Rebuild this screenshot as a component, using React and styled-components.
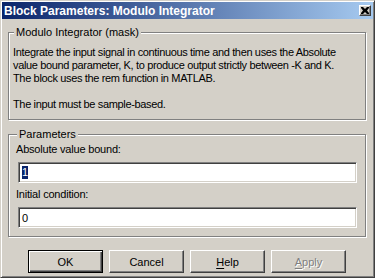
import React from 'react';
import styled, { createGlobalStyle } from 'styled-components';

const GlobalStyle = createGlobalStyle`
    html, body {
        margin: 0;
        padding: 0;
        background: #d4d0c8;
    }
    body {
        font-family: "Liberation Sans", Arial, sans-serif;
        font-size: 11px;
        color: #000;
    }
`;

const Window = styled.div`
    box-sizing: border-box;
    width: 375px;
    height: 278px;
    padding: 1px;
    display: flex;
    flex-direction: column;
    background: #d4d0c8;
    border: 1px solid;
    border-color: #d4d0c8 #404040 #404040 #d4d0c8;
    box-shadow: inset 1px 1px 0 #fff, inset -1px -1px 0 #808080;
`;

const TitleBar = styled.div`
    height: 17px;
    display: flex;
    align-items: center;
    padding: 0 2px 0 2px;
    background: linear-gradient(to right, #0a246a, #a6caf0);
    color: #fff;
    font-weight: bold;
    font-size: 12px;
    white-space: nowrap;
`;

const CloseBtn = styled.div`
    box-sizing: border-box;
    margin-left: auto;
    width: 12px;
    height: 11px;
    display: flex;
    align-items: center;
    justify-content: center;
    background: #d4d0c8;
    border: 1px solid;
    border-color: #fff #404040 #404040 #fff;
    box-shadow: inset -1px -1px 0 #808080;
`;

const Body = styled.div`
    flex: 1;
    display: flex;
    flex-direction: column;
    padding: 7px 7px 0 6px;
`;

const Group = styled.fieldset`
    margin: 0 0 ${p => p.$gap || 0}px 0;
    padding: ${p => p.$pad};
    border: 1px solid #808080;
    box-shadow: inset 1px 1px 0 #fff, 1px 1px 0 #fff;
    display: flex;
    flex-direction: column;
`;

const Legend = styled.legend`
    padding: 0 2px;
    margin-left: 1px;
    line-height: 13px;
    background: #d4d0c8;
`;

const Text = styled.p`
    margin: 0;
    line-height: 13px;
    white-space: nowrap;
    letter-spacing: -0.35px;
`;

const FieldLabel = styled.div`
    line-height: 13px;
    letter-spacing: -0.2px;
`;

const Edit = styled.div`
    box-sizing: border-box;
    height: 21px;
    margin: 6px 0 5px 2px;
    padding: 0 3px;
    display: flex;
    align-items: center;
    background: #fff;
    border: 1px solid;
    border-color: #808080 #fff #fff #808080;
    box-shadow: inset 1px 1px 0 #404040, inset -1px -1px 0 #d4d0c8;
`;

const Selected = styled.span`
    background: #0a246a;
    color: #fff;
    line-height: 13px;
`;

const ButtonRow = styled.div`
    display: flex;
    justify-content: center;
    gap: 6px;
    margin-top: 13px;
`;

const Button = styled.button`
    box-sizing: border-box;
    width: 75px;
    height: 23px;
    padding: 0;
    font-family: inherit;
    font-size: 11px;
    background: #d4d0c8;
    color: ${p => (p.disabled ? '#808080' : '#000')};
    text-shadow: ${p => (p.disabled ? '1px 1px 0 #fff' : 'none')};
    border: 1px solid;
    border-color: ${p => (p.$default ? '#000' : '#fff #404040 #404040 #fff')};
    box-shadow: ${p =>
        p.$default
            ? 'inset 1px 1px 0 #fff, inset -1px -1px 0 #404040, inset -2px -2px 0 #808080'
            : 'inset -1px -1px 0 #808080'};

    u {
        text-decoration-thickness: 1px;
        text-underline-offset: 2px;
    }
`;

const App = () => (
    <>
        <GlobalStyle />
        <Window>
            <TitleBar>
                Block Parameters: Modulo Integrator
                <CloseBtn>
                    <svg width="8" height="7" viewBox="0 0 8 7">
                        <path d="M0 0h2l2 2 2-2h2v1L6 3.5 8 6v1H6L4 5 2 7H0V6l2-2.5L0 1z" fill="#000" />
                    </svg>
                </CloseBtn>
            </TitleBar>
            <Body>
                <Group $pad="7px 5px 8px 4px" $gap={8}>
                    <Legend>Modulo Integrator (mask)</Legend>
                    <Text>
                        Integrate the input signal in continuous time and then uses the Absolute<br />
                        value bound parameter, K, to produce output strictly between -K and K.<br />
                        The block uses the rem function in MATLAB.<br />
                        <br />
                        The input must be sample-based.
                    </Text>
                </Group>
                <Group $pad="2px 8px 3px 7px">
                    <Legend>Parameters</Legend>
                    <FieldLabel>Absolute value bound:</FieldLabel>
                    <Edit>
                        <Selected>1</Selected>
                    </Edit>
                    <FieldLabel>Initial condition:</FieldLabel>
                    <Edit>0</Edit>
                </Group>
                <ButtonRow>
                    <Button $default>OK</Button>
                    <Button>Cancel</Button>
                    <Button><u>H</u>elp</Button>
                    <Button disabled><u>A</u>pply</Button>
                </ButtonRow>
            </Body>
        </Window>
    </>
);

export default App;
